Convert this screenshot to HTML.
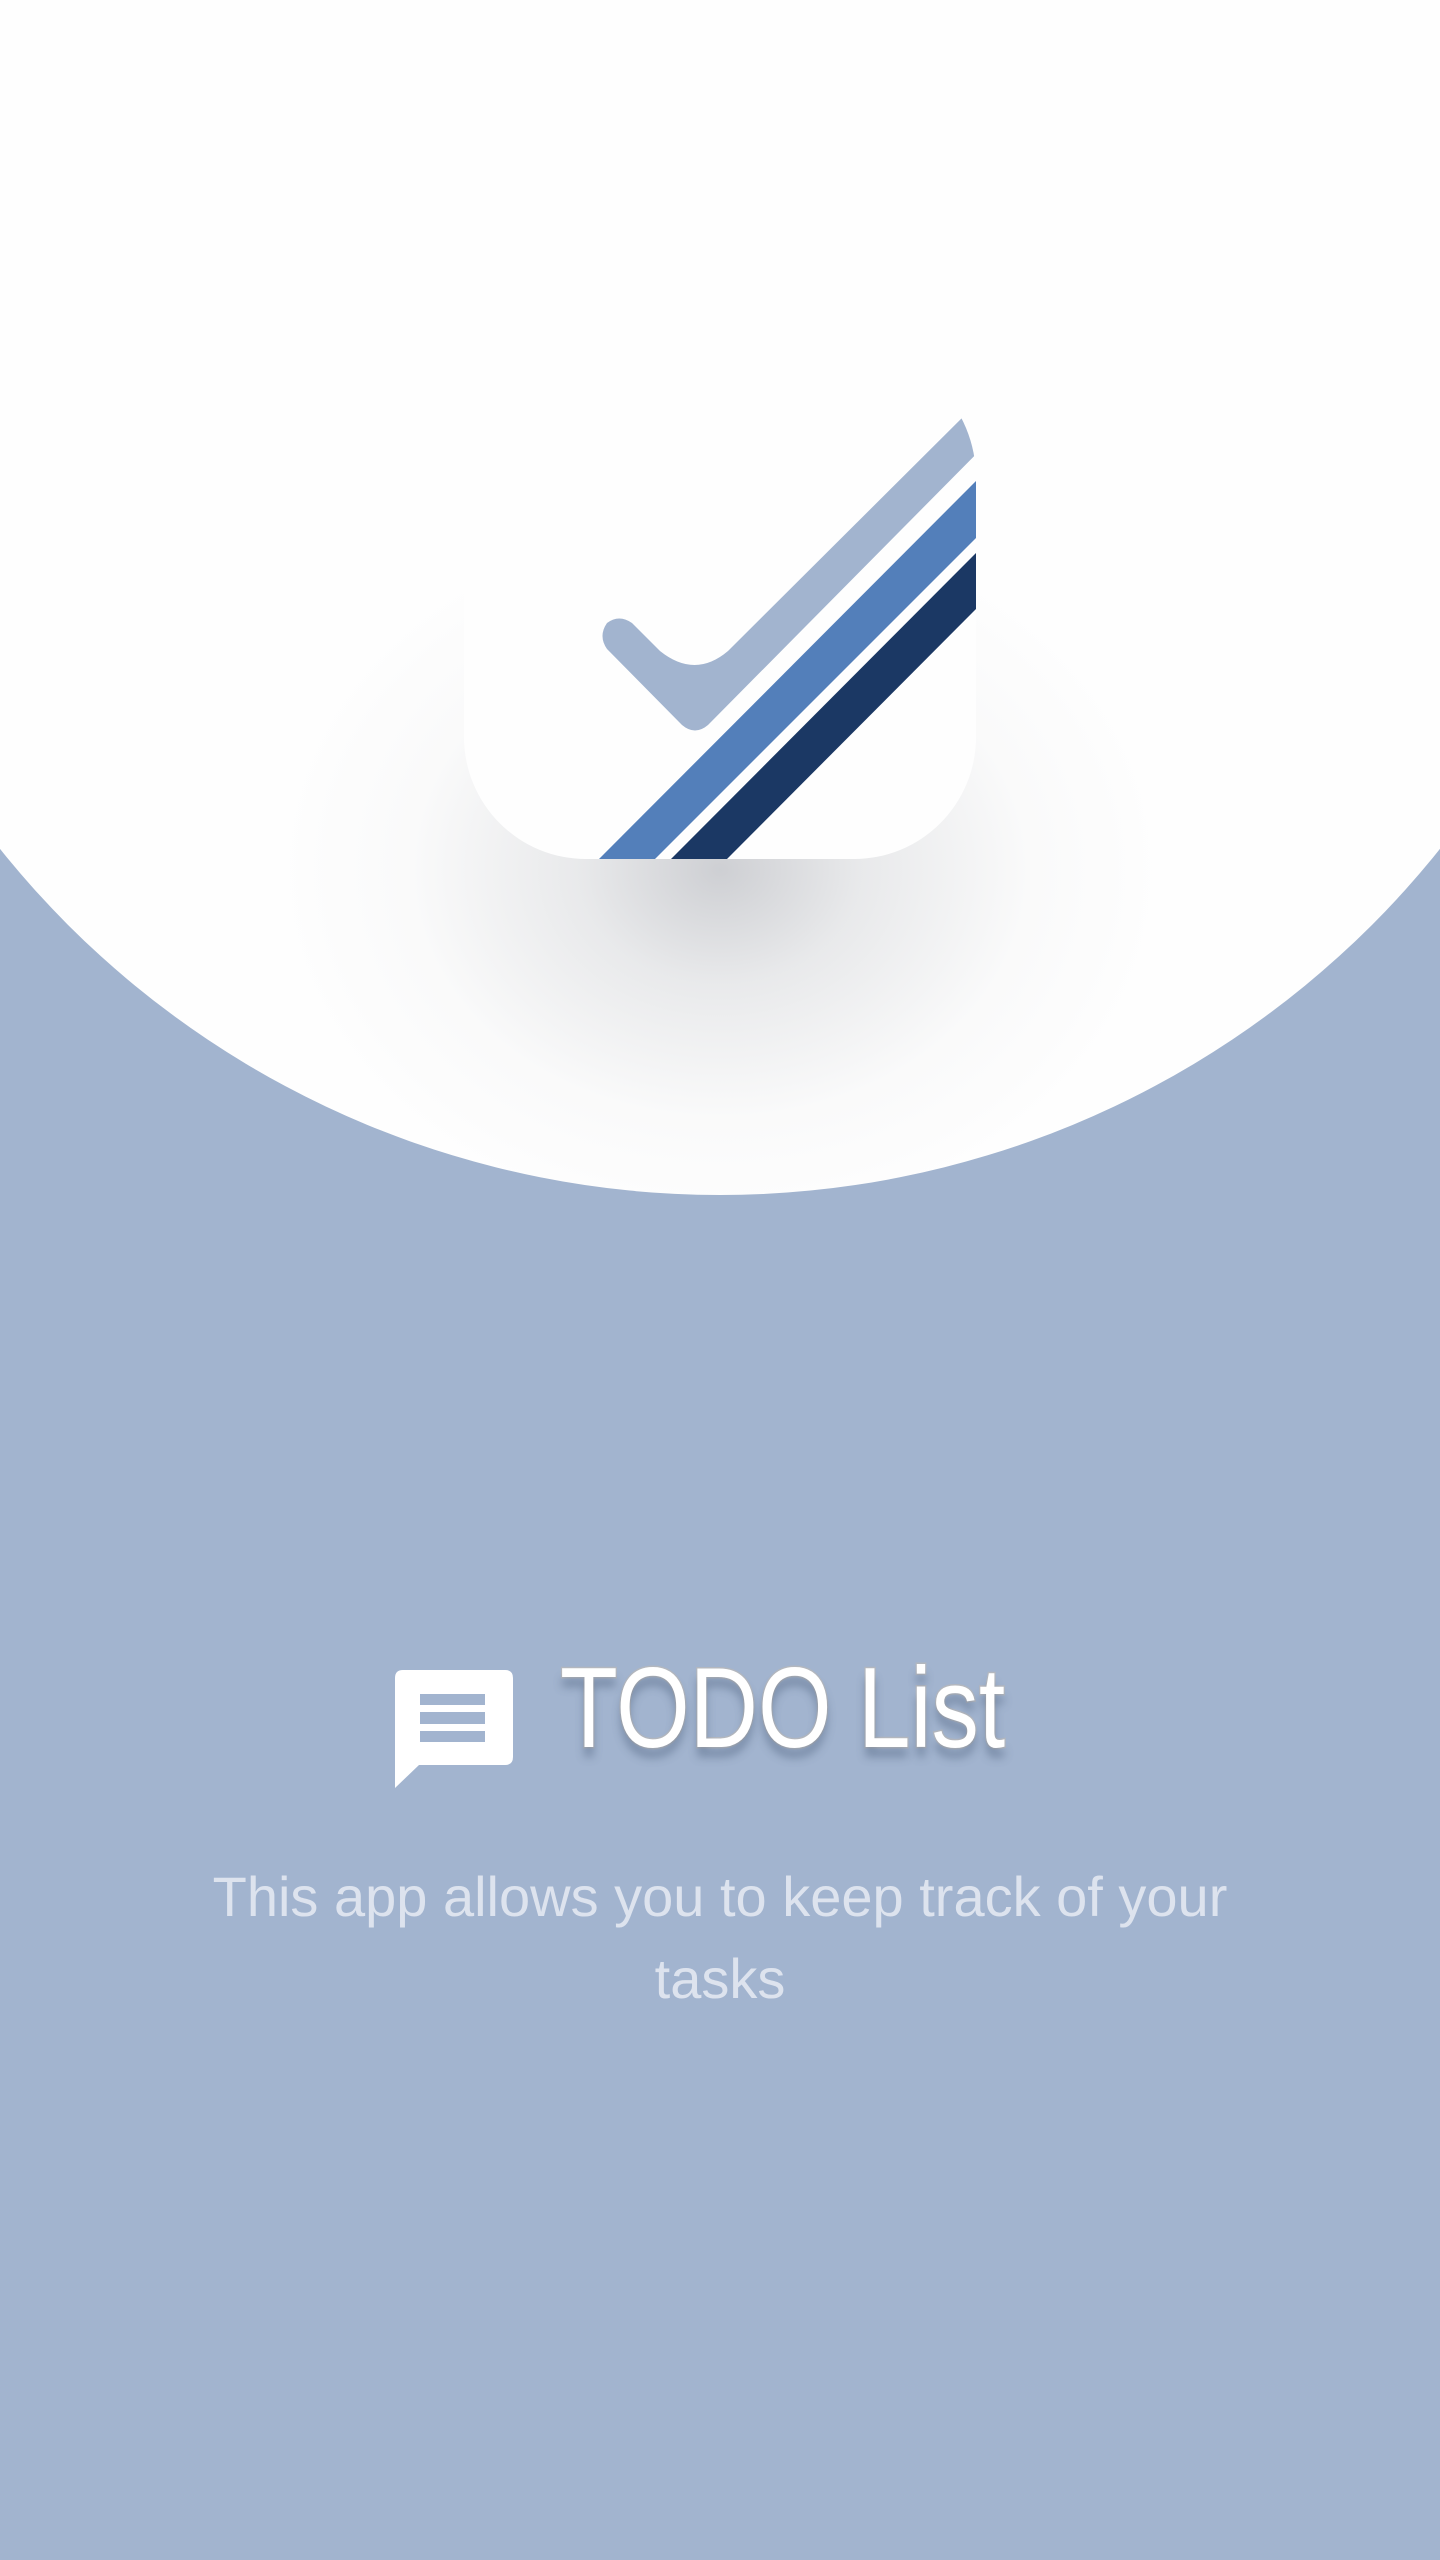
<!DOCTYPE html>
<html><head><meta charset="utf-8"><style>
html,body{margin:0;padding:0}
body{width:1440px;height:2560px;background:#a2b4cf;position:relative;overflow:hidden;font-family:"Liberation Sans",sans-serif}
.circle{position:absolute;left:-202px;top:-649px;width:1844px;height:1844px;border-radius:50%;background:#fefefe;overflow:hidden}
.shadow{position:absolute;left:160px;top:420px;width:1120px;height:900px;border-radius:50%;background:radial-gradient(ellipse 50% 50% at 50% 50%,rgba(180,182,188,.65) 0%,rgba(200,202,206,.4) 25%,rgba(225,226,228,.15) 55%,rgba(250,250,250,0) 80%)}
.icon{position:absolute;left:464px;top:300px;width:512px;height:560px}
.title{position:absolute;left:560px;top:1652px;font-size:114px;line-height:1;color:#fff;white-space:nowrap;transform-origin:0 0;transform:scaleX(0.83);-webkit-text-stroke:3px #b3b7be;paint-order:stroke fill;text-shadow:0 10px 10px rgba(70,90,120,.45)}
.sub{position:absolute;left:0;width:1440px;top:1856px;text-align:center;color:#dde3ee;font-size:56px;line-height:82px}
</style></head><body>
<div class="circle"><div class="shadow" style="left:362px;top:1069px"></div></div>
<svg class="icon" viewBox="464 300 512 560" width="512" height="560">
<defs><clipPath id="c"><path d="M464 348 H846 A130 130 0 0 1 976 478 V737 A122 122 0 0 1 854 859 H586 A122 122 0 0 1 464 737 Z"/></clipPath></defs>
<path d="M464 348 H846 A130 130 0 0 1 976 478 V737 A122 122 0 0 1 854 859 H586 A122 122 0 0 1 464 737 Z" fill="#fefefe"/>
<g clip-path="url(#c)">
<path d="M1000 360 L1000 430 L708 725 Q695 736 682 725 L607 649 Q598 636 607 623 Q619 614 632 623 L660 651 Q695 679 728 651 L985 395 Z" fill="#a2b4cf"/>
<polygon points="976,481 976,538 655,859 599,859" fill="#537fba"/>
<polygon points="976,553 976,609 727,859 671,859" fill="#1b3864"/>
</g>
</svg>
<svg style="position:absolute;left:395px;top:1670px" width="118" height="119" viewBox="0 0 118 119">
<path d="M8 0 H110 Q118 0 118 8 V87 Q118 95 110 95 H24 L0 118 V8 Q0 0 8 0 Z" fill="#fff"/>
<rect x="25" y="24" width="65" height="11" fill="#a2b4cf"/>
<rect x="25" y="42" width="65" height="12" fill="#a2b4cf"/>
<rect x="25" y="61" width="65" height="11" fill="#a2b4cf"/>
</svg>
<div class="title">TODO List</div>
<div class="sub">This app allows you to keep track of your<br>tasks</div>
</body></html>
